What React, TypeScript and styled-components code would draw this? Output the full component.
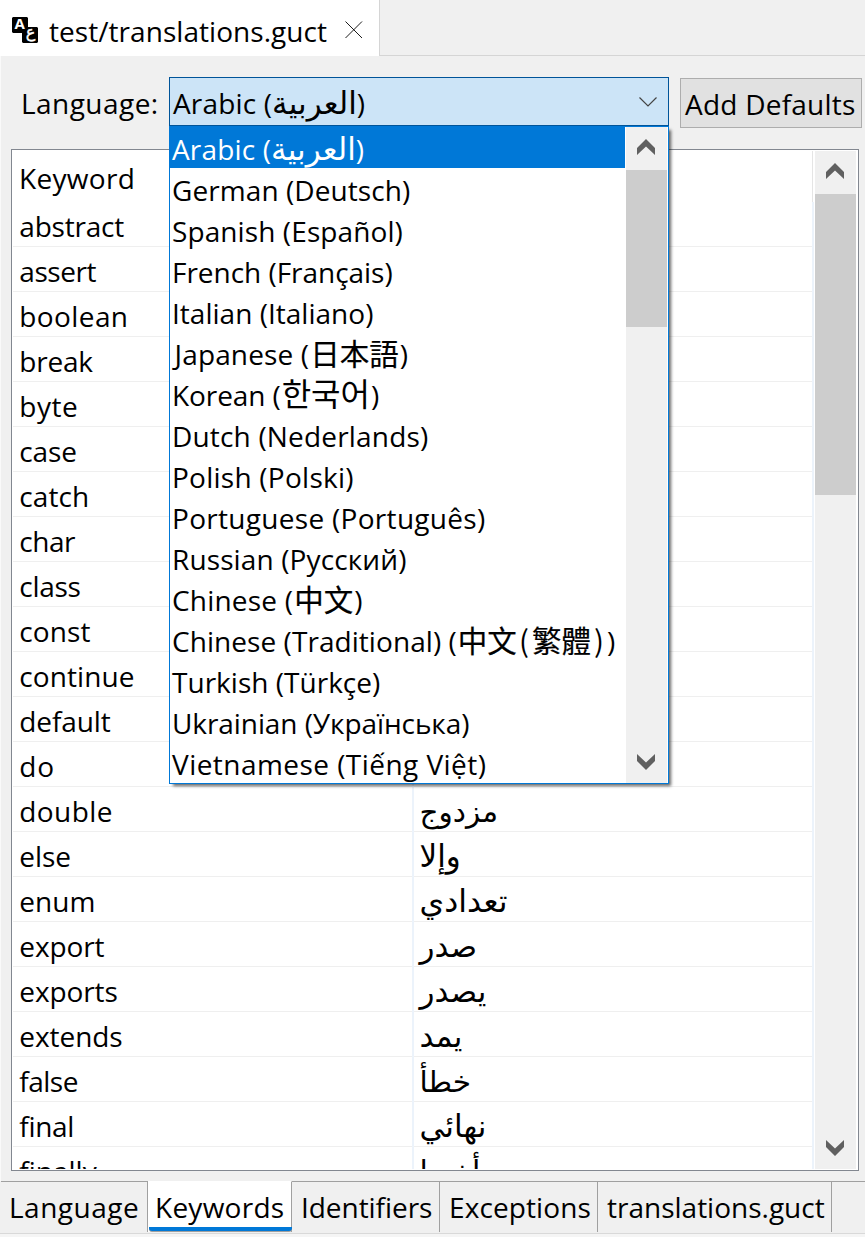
import React from 'react';
import styled, { createGlobalStyle, css } from 'styled-components';

const GlobalStyle = createGlobalStyle`
  * { box-sizing: border-box; }
  body {
    margin: 0;
    background: #f0f0f0;
    color: #000;
    font: 28px/38px "Open Sans", "DejaVu Sans", "Noto Sans CJK SC", sans-serif;
    white-space: nowrap;
    overflow: hidden;
  }
`;

const Window = styled.div`
  display: flex;
  flex-direction: column;
  width: 865px;
  height: 1237px;
  background: #f0f0f0;
  overflow: hidden;
`;

const Label = styled.span<{ $ls?: number }>`
  letter-spacing: ${(p) => p.$ls ?? 0}px;
`;

const Arabic = styled.span<{ $size?: number }>`
  font-family: "DejaVu Sans", sans-serif;
  font-size: ${(p) => p.$size ?? 31}px;
  line-height: 0;
  letter-spacing: 0;
`;

const Cjk = styled.span<{ $font: string; $size?: number; $stroke?: number }>`
  font-family: "Noto Sans CJK ${(p) => p.$font}", sans-serif;
  font-size: ${(p) => p.$size ?? 29.5}px;
  line-height: 0;
  letter-spacing: 0;
  margin: 0 1px;
  -webkit-text-stroke: ${(p) => p.$stroke ?? 0.2}px currentColor;
`;

const HalfParen = styled.span<{ $open?: boolean }>`
  display: inline-block;
  width: 15px;
  text-align: ${(p) => (p.$open ? 'right' : 'left')};
  padding-${(p) => (p.$open ? 'right' : 'left')}: 3px;
  line-height: 0;
  -webkit-text-stroke: 0;
`;

const EditorTabs = styled.div`
  display: flex;
  height: 56px;
`;

const EditorTab = styled.div`
  display: flex;
  align-items: center;
  width: 379px;
  padding: 4px 0 0 12px;
  background: #fff;
  svg { flex: none; }
`;

const EditorName = styled(Label)`
  margin: 1px 0 0 10px;
  width: 296px;
`;

const EditorTabsRest = styled.div`
  flex: 1;
  border-left: 1px solid #d5d5d5;
  border-bottom: 1px solid #d5d5d5;
`;

const Page = styled.div`
  display: flex;
  flex-direction: column;
  height: 1125px;
  border-left: 1px solid #fafafa;
`;

const Toolbar = styled.div`
  display: flex;
  height: 93px;
  padding: 21px 3px 0 20px;
`;

const FieldLabel = styled(Label)`
  width: 148px;
  padding-top: 7px;
`;

const Combo = styled.div`
  position: relative;
  width: 500px;
  height: 49px;
`;

const ComboField = styled.div`
  display: flex;
  justify-content: space-between;
  height: 49px;
  padding: 6px 11px 0 3px;
  border: 1px solid #005499;
  background: #cce4f7;
  svg { margin-top: 13px; }
`;

const Popup = styled.div`
  position: absolute;
  z-index: 2;
  top: 49px;
  left: 0;
  display: flex;
  width: 500px;
  height: 658px;
  border: 1px solid #0078d7;
  background: #fff;
  box-shadow: 3px 3px 3px -1px rgba(0, 0, 0, 0.6);
`;

const Options = styled.div`
  width: 455px;
`;

const Option = styled.div<{ $selected?: boolean; $indent?: number }>`
  height: 41px;
  padding: 3px 0 0 ${(p) => p.$indent ?? 2}px;
  ${(p) => p.$selected && css`
    background: #0078d7;
    color: #fff;
  `}
`;

const AddButton = styled.button`
  width: 182px;
  height: 50px;
  margin: 1px 0 0 11px;
  padding: 1px 0 0 4px;
  border: 1px solid #adadad;
  background: #e1e1e1;
  color: inherit;
  font: inherit;
  text-align: left;
`;

const Bar = styled.div`
  display: flex;
  flex-direction: column;
  width: 41px;
  margin-left: 1px;
  background: #f0f0f0;
`;

const BarButton = styled.div<{ $end?: boolean }>`
  height: 43px;
  padding: ${(p) => (p.$end ? 14 : 12)}px 0 0 11px;
  margin-top: ${(p) => (p.$end ? 'auto' : 0)};
  svg { display: block; }
`;

const Thumb = styled.div<{ $size: number }>`
  height: ${(p) => p.$size}px;
  background: #cdcdcd;
`;

const TableFrame = styled.div`
  display: flex;
  width: 848px;
  height: 1022px;
  margin-left: 10px;
  padding: 1px;
  border: 1px solid #828790;
  background: #fff;
`;

const Table = styled.div`
  width: 801px;
  height: 1018px;
  overflow: hidden;
`;

const HeaderRow = styled.div`
  height: 51px;
  width: 800px;
  padding: 8px 0 0 6px;
  border-right: 1px solid #e5e5e5;
`;

const Rows = styled.div`
  border-right: 2px solid #ecf3fb;
`;

const Row = styled.div`
  display: grid;
  grid-template-columns: 401px 1fr;
  height: 45px;
  border-bottom: 1px solid #efefef;
`;

const KeywordCell = styled.div`
  height: 45px;
  padding: 5px 0 0 6.3px;
  border-right: 2px solid #ecf3fb;
`;

const ValueCell = styled.div`
  padding: 5px 0 0 5.5px;
  height: 44px;
`;

const PageTabs = styled.div`
  display: flex;
  height: 51px;
  padding-left: 1px;
`;

const PageTab = styled.div<{ $width: number; $indent: number; $active?: boolean }>`
  position: relative;
  width: ${(p) => p.$width}px;
  padding: 6px 0 0 ${(p) => p.$indent}px;
  border-top: 1px solid #a0a0a0;
  border-right: 1px solid #a0a0a0;
  ${(p) => p.$active && css`
    border-top-color: #fff;
    background: #fff;
    &::after {
      content: '';
      position: absolute;
      left: 1px;
      right: -1px;
      bottom: 1px;
      height: 4px;
      background: #0078d7;
      border-radius: 0 0 3px 3px;
      box-shadow: 0 1px 0 #a0a0a0;
    }
  `}
`;

const PageTabsRest = styled.div`
  flex: 1;
  border-top: 1px solid #a0a0a0;
`;

const Footer = styled.div`
  height: 4px;
  margin-top: 1px;
  border-top: 1px solid #d9d9d9;
  background: #f5f5f5;
`;

const FileIcon = () => (
  <svg width="27" height="27" viewBox="0 0 27 27" overflow="visible">
    <path d="M1 0H15L16 1V10H25L26 11V25L25 26H11L10 25V16H1L0 15V1Z" fill="#000" />
    <text x="7.6" y="12.4" textAnchor="middle" fill="#fff" fontFamily="Open Sans, sans-serif" fontWeight="700" fontSize="15">A</text>
    <text x="18.4" y="20" textAnchor="middle" fill="#fff" stroke="#fff" strokeWidth="0.4" fontFamily="DejaVu Sans, sans-serif" fontSize="16">ع</text>
  </svg>
);

const CloseIcon = () => (
  <svg width="18" height="18" viewBox="0 0 18 18">
    <path d="M.5 .5L17 17M17 .5L.5 17" stroke="#000" strokeWidth="0.9" fill="none" />
  </svg>
);

const ComboArrow = () => (
  <svg width="18" height="10" viewBox="0 0 18 10">
    <path d="M.5 .5L9 9L17.5 .5" stroke="#444" strokeWidth="1.2" fill="none" />
  </svg>
);

const ScrollArrow = ({ down }: { down?: boolean }) => (
  <svg width="18" height="16" viewBox="0 0 18 16">
    <path d={down ? 'M0 0L9 8.4L18 0V7L9 16L0 7Z' : 'M0 16L9 7.6L18 16V9L9 0L0 9Z'} fill="#606060" />
  </svg>
);

const ScrollBar = ({ thumb }: { thumb: number }) => (
  <Bar>
    <BarButton><ScrollArrow /></BarButton>
    <Thumb $size={thumb} />
    <BarButton $end><ScrollArrow down /></BarButton>
  </Bar>
);

const arabicName = <>Arabic (<Arabic $size={31}>العربية</Arabic>)</>;

const languages: [React.ReactNode, number, number?][] = [
  [arabicName, 0.15],
  ['German (Deutsch)', 0.08],
  ['Spanish (Español)', 0.1],
  ['French (Français)', -0.03],
  ['Italian (Italiano)', 0.02],
  [<>Japanese (<Cjk $font="JP">日本語</Cjk>)</>, 0.15, 4.5],
  [<>Korean (<Cjk $font="KR" $size={32} $stroke={0}>한국어</Cjk>)</>, -0.1],
  ['Dutch (Nederlands)', 0.18],
  ['Polish (Polski)', 0.25],
  ['Portuguese (Português)', 0.3],
  ['Russian (Русский)', 0.12],
  [<>Chinese (<Cjk $font="SC">中文</Cjk>)</>, 0.2],
  [<>Chinese (Traditional) (<Cjk $font="TC">中文<HalfParen $open>(</HalfParen>繁體<HalfParen>)</HalfParen></Cjk>)</>, 0.06],
  ['Turkish (Türkçe)', 0.02],
  ['Ukrainian (Українська)', -0.08],
  ['Vietnamese (Tiếng Việt)', 0.45],
];

const keywords: [string, number, string?, number?][] = [
  ['abstract', -0.2], ['assert', -0.45], ['boolean', 0.4], ['break', -0.2],
  ['byte', 0.5], ['case', -0.1], ['catch', 0.1], ['char', -0.5],
  ['class', -0.3], ['const', 0.1], ['continue', 0.1], ['default', -0.1],
  ['do', 0.7], ['double', 0.4, 'مزدوج', 29.5], ['else', -0.1, 'وإلا'],
  ['enum', 0.05, 'تعدادي', 31.5], ['export', -0.1, 'صدر'], ['exports', -0.1, 'يصدر'],
  ['extends', -0.06, 'يمد'], ['false', -0.5, 'خطأ', 29.5], ['final', -0.3, 'نهائي'],
  ['finally', 0, 'أخيرا', 30],
];

const pages: [string, number, number, number][] = [
  ['Language', 147, 0.5, 8],
  ['Keywords', 144, 0.25, 7],
  ['Identifiers', 148, -0.05, 9],
  ['Exceptions', 158, 0.1, 9],
  ['translations.guct', 234, 0, 9],
];

export default function App() {
  return (
    <Window>
      <GlobalStyle />
      <EditorTabs>
        <EditorTab>
          <FileIcon />
          <EditorName $ls={0.05}>test/translations.guct</EditorName>
          <CloseIcon />
        </EditorTab>
        <EditorTabsRest />
      </EditorTabs>
      <Page>
        <Toolbar>
          <FieldLabel $ls={0.45}>Language:</FieldLabel>
          <Combo>
            <ComboField>
              <Label $ls={0.15}>{arabicName}</Label>
              <ComboArrow />
            </ComboField>
            <Popup>
              <Options>
                {languages.map(([name, ls, indent], i) => (
                  <Option key={i} $selected={i === 0} $indent={indent}><Label $ls={ls}>{name}</Label></Option>
                ))}
              </Options>
              <ScrollBar thumb={157} />
            </Popup>
          </Combo>
          <AddButton><Label $ls={0.23}>Add Defaults</Label></AddButton>
        </Toolbar>
        <TableFrame>
          <Table>
            <HeaderRow><Label $ls={0.3}>Keyword</Label></HeaderRow>
            <Rows>
              {keywords.map(([word, ls, value, size]) => (
                <Row key={word}>
                  <KeywordCell><Label $ls={ls}>{word}</Label></KeywordCell>
                  <ValueCell>{value && <Arabic $size={size}>{value}</Arabic>}</ValueCell>
                </Row>
              ))}
            </Rows>
          </Table>
          <ScrollBar thumb={301} />
        </TableFrame>
      </Page>
      <PageTabs>
        {pages.map(([name, width, ls, indent]) => (
          <PageTab key={name} $width={width} $indent={indent} $active={name === 'Keywords'}>
            <Label $ls={ls}>{name}</Label>
          </PageTab>
        ))}
        <PageTabsRest />
      </PageTabs>
      <Footer />
    </Window>
  );
}
